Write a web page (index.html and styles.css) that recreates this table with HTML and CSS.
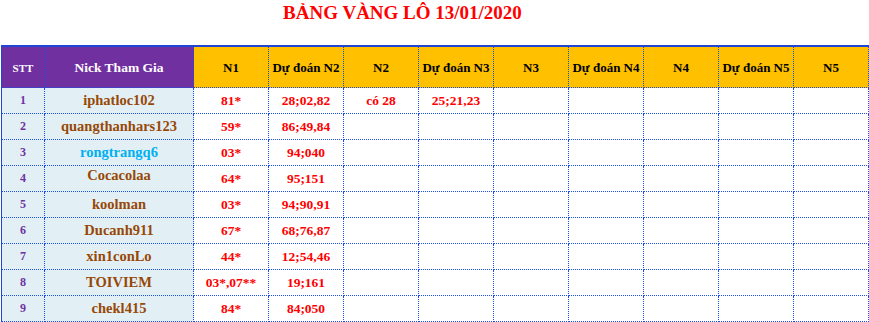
FILE: index.html
```html
<!DOCTYPE html>
<html lang="vi">
<head>
<meta charset="utf-8">
<title>Bảng vàng lô</title>
<link rel="stylesheet" href="styles.css">
</head>
<body>
<h1 class="title">BẢNG VÀNG LÔ 13/01/2020</h1>
<div class="sheet">
  <div class="c h stt-h">STT</div>
  <div class="c h nick-h">Nick Tham Gia</div>
  <div class="c h y">N1</div>
  <div class="c h y">Dự đoán N2</div>
  <div class="c h y">N2</div>
  <div class="c h y">Dự đoán N3</div>
  <div class="c h y">N3</div>
  <div class="c h y">Dự đoán N4</div>
  <div class="c h y">N4</div>
  <div class="c h y">Dự đoán N5</div>
  <div class="c h y">N5</div>

  <div class="c n">1</div><div class="c nm">iphatloc102</div><div class="c r">81*</div><div class="c r">28;02,82</div><div class="c r">có 28</div><div class="c r">25;21,23</div><div class="c"></div><div class="c"></div><div class="c"></div><div class="c"></div><div class="c"></div>
  <div class="c n">2</div><div class="c nm">quangthanhars123</div><div class="c r">59*</div><div class="c r">86;49,84</div><div class="c"></div><div class="c"></div><div class="c"></div><div class="c"></div><div class="c"></div><div class="c"></div><div class="c"></div>
  <div class="c n">3</div><div class="c nm sky">rongtrangq6</div><div class="c r">03*</div><div class="c r">94;040</div><div class="c"></div><div class="c"></div><div class="c"></div><div class="c"></div><div class="c"></div><div class="c"></div><div class="c"></div>
  <div class="c n">4</div><div class="c nm up">Cocacolaa</div><div class="c r">64*</div><div class="c r">95;151</div><div class="c"></div><div class="c"></div><div class="c"></div><div class="c"></div><div class="c"></div><div class="c"></div><div class="c"></div>
  <div class="c n">5</div><div class="c nm">koolman</div><div class="c r">03*</div><div class="c r">94;90,91</div><div class="c"></div><div class="c"></div><div class="c"></div><div class="c"></div><div class="c"></div><div class="c"></div><div class="c"></div>
  <div class="c n">6</div><div class="c nm">Ducanh911</div><div class="c r">67*</div><div class="c r">68;76,87</div><div class="c"></div><div class="c"></div><div class="c"></div><div class="c"></div><div class="c"></div><div class="c"></div><div class="c"></div>
  <div class="c n">7</div><div class="c nm">xin1conLo</div><div class="c r">44*</div><div class="c r">12;54,46</div><div class="c"></div><div class="c"></div><div class="c"></div><div class="c"></div><div class="c"></div><div class="c"></div><div class="c"></div>
  <div class="c n">8</div><div class="c nm">TOIVIEM</div><div class="c r">03*,07**</div><div class="c r">19;161</div><div class="c"></div><div class="c"></div><div class="c"></div><div class="c"></div><div class="c"></div><div class="c"></div><div class="c"></div>
  <div class="c n">9</div><div class="c nm">chekl415</div><div class="c r">84*</div><div class="c r">84;050</div><div class="c"></div><div class="c"></div><div class="c"></div><div class="c"></div><div class="c"></div><div class="c"></div><div class="c"></div>
</div>
</body>
</html>
```

FILE: styles.css
```css
html, body {
  margin: 0;
  padding: 0;
  background: #ffffff;
}

body {
  font-family: "Liberation Serif", "Times New Roman", serif;
  overflow: hidden;
}

.title {
  margin: 0;
  height: 45px;
  box-sizing: border-box;
  padding: 2px 64px 0 0;
  text-align: center;
  font-size: 19px;
  line-height: 22px;
  font-weight: bold;
  color: #ff0000;
}

.sheet {
  display: grid;
  grid-template-columns: 43px 149px repeat(9, 75px);
  grid-template-rows: 41px repeat(9, 26px);
  margin-left: 1px;
  width: max-content;
  border-left: 1px solid #1f45d6;
  border-top: 2px solid #1f45d6;
}

.c {
  box-sizing: border-box;
  border-right: 1px dotted #1a4ee8;
  border-bottom: 1px dotted #1a4ee8;
  display: flex;
  align-items: center;
  justify-content: center;
  font-weight: bold;
  white-space: nowrap;
  background: #ffffff;
}

.h {
  font-size: 13px;
  padding-top: 2px;
}

.stt-h {
  background: #7030a0;
  color: #ffffff;
  font-size: 11px;
}

.nick-h {
  background: #7030a0;
  color: #ffffff;
  font-size: 13.5px;
}

.y {
  background: #ffc000;
  color: #000000;
}

.n {
  background: #e2f0f6;
  color: #7030a0;
  font-size: 12px;
}

.nm {
  background: #e2f0f6;
  color: #974806;
  font-size: 14.5px;
}

.nm.sky {
  color: #00b0f0;
}

.nm.up {
  padding-bottom: 6px;
}

.r {
  color: #ff0000;
  font-size: 13.5px;
}
```
